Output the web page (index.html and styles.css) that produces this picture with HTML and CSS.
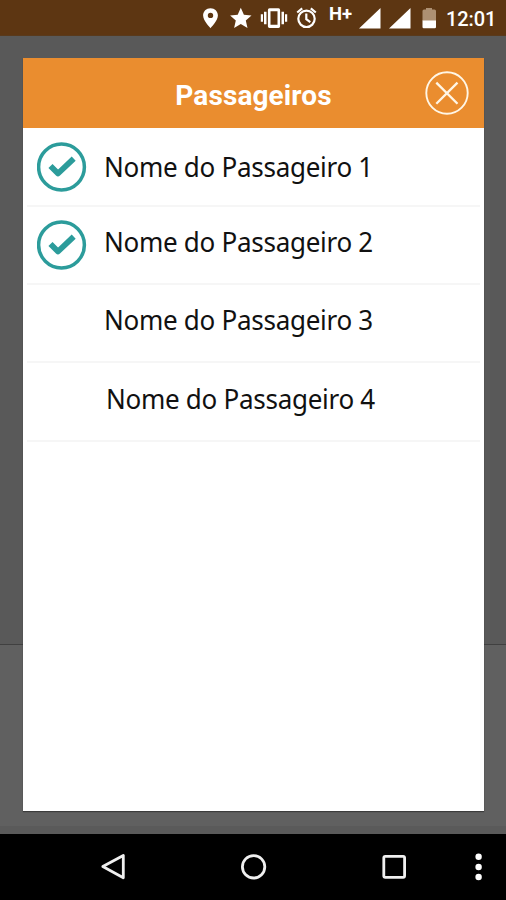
FILE: index.html
```html
<!DOCTYPE html>
<html lang="pt">
<head>
<meta charset="utf-8">
<title>Passageiros</title>
<link rel="stylesheet" href="styles.css">
</head>
<body>
<div class="screen">
  <header class="status">
    <svg class="status-icons" width="250" height="36" viewBox="196 0 250 36" fill="#fff">
      <path fill-rule="evenodd" d="M210.500 8.300c-4.300 0-7.400 3.200-7.400 7.300 0 5.200 7.400 12.600 7.400 12.600s7.400-7.400 7.400-12.600c0-4.100-3.100-7.300-7.400-7.300zm0 4.400a2.700 2.700 0 1 1 0 5.400 2.700 2.700 0 0 1 0-5.400z"/>
      <path d="M240.800 7.800l3.100 7 7.600.8-5.700 5 1.700 7.500-6.700-4-6.700 4 1.700-7.500-5.700-5 7.600-.8z"/>
      <path fill-rule="evenodd" d="M269.500 8.300h9q1.600 0 1.600 1.600v16.400q0 1.600-1.600 1.600h-9q-1.600 0-1.600-1.600V9.900q0-1.600 1.600-1.600zm1 3v13.500h7V11.300z"/>
      <path d="M264 11.800h2.500v12.400H264zM281.500 11.800h2.500v12.400h-2.500zM260.800 14.300h2.200v7.400h-2.200zM285 14.300h2.200v7.400H285z"/>
      <g fill="none" stroke="#fff" stroke-width="2.200">
        <circle cx="306.500" cy="18.800" r="8.200"/>
        <path d="M306.300 13.500v5.700l4 2.900M297.200 12.500l5-4.100M315.800 12.500l-5-4.100"/>
      </g>
      <path d="M380.500 8v20.500H359zM410.500 8v20.500H389z"/>
      <path fill="#ad9073" d="M426 9.500V8h6v1.500h2.500q1.500 0 1.500 1.500v10h-13.500V11q0-1.500 1.500-1.500z"/>
      <path d="M422.500 20.500H436V27q0 1.300-1.300 1.300h-11q-1.200 0-1.200-1.300z"/>
      <text class="network" x="329" y="19.500">H+</text>
    </svg>
    <span class="clock">12:01</span>
  </header>
  <main class="backdrop">
    <section class="dialog">
      <div class="dialog-header">
        <h1 class="title">Passageiros</h1>
        <svg class="close" width="44" height="44" viewBox="0 0 44 44" fill="none" stroke="#fff6e6" stroke-width="1.900">
          <circle cx="22" cy="22" r="20.700"/>
          <path d="M11.300 11.600l21.200 21.200M32.500 11.600L11.300 32.800" stroke-width="2.300"/>
        </svg>
      </div>
      <ul class="list">
        <li class="row row-1">
          <svg class="check" width="50" height="50" viewBox="0 0 50 50" fill="none" stroke="#2c9c9b"><circle cx="24.500" cy="25" r="22.900" stroke-width="3.500"/><path d="M13.500 24l7.500 7.500L36.700 16.700" stroke-width="5.800" stroke-linejoin="round"/></svg>
          <span class="name">Nome do Passageiro 1</span>
        </li>
        <li class="row row-2">
          <svg class="check" width="50" height="50" viewBox="0 0 50 50" fill="none" stroke="#2c9c9b"><circle cx="24.500" cy="25" r="22.900" stroke-width="3.500"/><path d="M13.500 24l7.500 7.500L36.700 16.700" stroke-width="5.800" stroke-linejoin="round"/></svg>
          <span class="name">Nome do Passageiro 2</span>
        </li>
        <li class="row row-3"><span class="name">Nome do Passageiro 3</span></li>
        <li class="row row-4"><span class="name">Nome do Passageiro 4</span></li>
      </ul>
    </section>
  </main>
  <nav class="navbar">
    <svg width="506" height="66" viewBox="0 834 506 66" fill="none" stroke="#f0f0f0" stroke-width="2.800">
      <path d="M123.300 855.400v22.400L102.800 866.600z" stroke-linejoin="round"/>
      <circle cx="253.600" cy="866.800" r="11.200"/>
      <rect x="383.800" y="856.300" width="20.800" height="21" rx="1.500"/>
      <g fill="#fff" stroke="none"><circle cx="478.600" cy="856.800" r="3.200"/><circle cx="478.600" cy="867" r="3.200"/><circle cx="478.600" cy="877" r="3.200"/></g>
    </svg>
  </nav>
</div>
</body>
</html>
```
FILE: styles.css
```css
* { box-sizing: border-box; }
body { margin: 0; font-family: Roboto, sans-serif; }
.screen { width: 506px; height: 900px; display: flex; flex-direction: column; overflow: hidden; }
.status { height: 36px; background: #5d3612; color: #fff; display: flex; padding-left: 196px; border-bottom: 1px solid #593a1c; }
.status-icons { flex: none; }
.network { font: 700 18.5px Roboto, sans-serif; }
.clock { font-size: 20px; font-weight: 500; line-height: 38px; letter-spacing: -0.1px; color: #fff; }
.backdrop {
  flex: 1;
  padding: 22px 22px 0 23px;
  background: linear-gradient(#595959 608px, #404040 608px, #404040 609px, #606060 609px, #606060 790px, #5a5a5a 790px);
}
.dialog { width: 461px; height: 753px; background: #fff; box-shadow: 0 1px 1px #3c3c3c; }
.dialog-header { height: 70px; background: #ea8d2f; display: grid; grid-template-columns: 1fr; position: relative; }
.title { margin: 0; text-align: center; font-size: 28px; font-weight: 700; line-height: 75px; letter-spacing: 0.1px; color: #fff; }
.close { position: absolute; left: 402px; top: 13px; }
.list { margin: 0; padding: 0 4px 0 4px; list-style: none; }
.row { display: flex; border-bottom: 2px solid #f6f6f6; padding-left: 77px; }
.row-1 { height: 79px; padding: 14px 0 0 10px; }
.row-2 { height: 78px; padding: 13px 0 0 10px; }
.row-3 { height: 78px; padding-top: 16px; }
.row-4 { height: 79px; padding: 17px 0 0 79px; }
.check { flex: none; margin-right: 17px; }
.name { font-family: "Noto Sans", sans-serif; font-size: 27px; line-height: 38px; letter-spacing: -0.3px; color: #111; white-space: nowrap; transform: scaleX(0.964); transform-origin: left; }
.row-1 .name { margin-top: 6px; }
.row-2 .name { margin-top: 3px; }
.navbar { height: 66px; background: #000; }
.navbar svg { display: block; }
```
